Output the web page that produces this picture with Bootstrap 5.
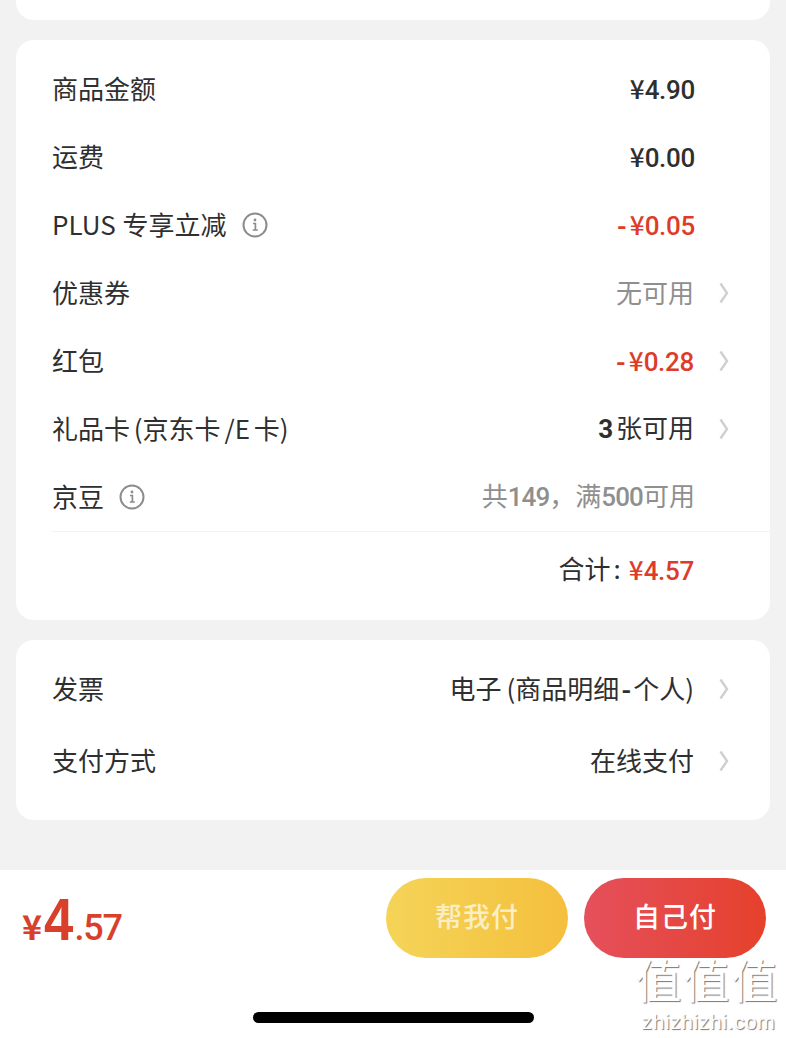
<!DOCTYPE html>
<html lang="zh">
<head>
<meta charset="utf-8">
<title>订单结算</title>
<link href="https://cdn.jsdelivr.net/npm/bootstrap@5.3.0/dist/css/bootstrap.min.css" rel="stylesheet">
<style>
html,body{height:1038px;overflow:hidden}
body{background:#f2f2f2;font-family:"Noto Sans CJK SC","Noto Sans",sans-serif;color:#2f2f2f;font-size:26px;position:relative}
.sheet{border-radius:18px;background:#fff;margin:0 16px 20px}
.sheet-stub{height:20px;border-radius:0 0 18px 18px}
.sheet-fees{height:580px;padding:15px 0 0 36px}
.sheet-misc{height:180px;padding:13px 0 0 36px;margin-bottom:50px}
.fee-row{height:68px;padding-right:75px;line-height:1}
.misc-row{height:72px;padding-right:75px;line-height:1}
.has-arrow{padding-right:41px}
.zh{padding-bottom:3px;word-spacing:-2px}
.zh-wide{word-spacing:1px}
.amt{font-family:Roboto,"Noto Sans CJK SC",sans-serif;font-weight:500;letter-spacing:-.3px}
.amt-tight{letter-spacing:-.9px}
.cny{font-family:"Noto Sans CJK SC",sans-serif;font-weight:500;letter-spacing:0}
.minus{font-weight:700;display:inline-block;width:16px;text-align:center}
.red{color:#dd3c2a}
.mute{color:#8f8f8f}
.arrow{width:10px;height:22px;margin-left:25px;flex:none}
.info{width:26px;height:26px;margin-left:15px;flex:none}
.rule{height:1px;background:#f3f3f3;margin:0}
.total-row{height:75px;padding-right:76px;line-height:1}
.colon{margin:0 8px 0 3px}
.dash{display:inline-block;width:14px;text-align:center;font-weight:700}
.paren-open{margin-left:1px}
.pay-gap{margin-left:3px}
.paybar{height:168px;background:#fff;padding:8px 20px 0 22px}
.pay-sum{color:#d9402b;font-family:"Liberation Sans",sans-serif;font-weight:700;line-height:1;padding-top:12px}
.pay-cny{font-size:34px;font-family:"Noto Sans CJK SC",sans-serif;font-weight:700}
.pay-int{font-size:60px;display:inline-block;transform:scaleX(.88);transform-origin:left;margin-right:-3px;margin-left:2px}
.pay-dec{font-size:36px;font-family:Roboto,sans-serif;font-weight:500;letter-spacing:-1.2px}
.pay-btn{width:182px;height:80px;border:0;border-radius:40px;color:#fff;font-size:27px;font-weight:500;letter-spacing:1px;padding:0 0 4px}
.btn-help{background:linear-gradient(90deg,#f4d458,#f5bf3d);color:#fbeec4}
.btn-self{background:linear-gradient(90deg,#e5505c,#e5412c)}
.homebar{position:absolute;left:253px;top:1012px;width:281px;height:11px;border-radius:6px;background:#000}
.wm{position:absolute;left:636px;top:955px;width:145px;text-align:center;color:#fff;line-height:1;text-shadow:1px 1px 1px #777}
.wm-cn{font-size:46px;letter-spacing:2px;display:block;height:50px;white-space:nowrap;margin:0 0 6px -2px}
.wm-en{font-size:21px;font-family:"Liberation Sans",sans-serif;letter-spacing:.6px;display:block;white-space:nowrap}
</style>
</head>
<body>
<div class="sheet sheet-stub"></div>

<div class="sheet sheet-fees">
  <div class="fee-row d-flex align-items-center justify-content-between"><span class="zh">商品金额</span><span class="amt"><span class="cny">¥</span>4.90</span></div>
  <div class="fee-row d-flex align-items-center justify-content-between"><span class="zh">运费</span><span class="amt"><span class="cny">¥</span>0.00</span></div>
  <div class="fee-row d-flex align-items-center justify-content-between"><span class="d-flex align-items-center"><span class="zh zh-wide">PLUS 专享立减</span><svg class="info" viewBox="0 0 26 26" fill="none"><circle cx="13" cy="13" r="11.5" stroke="#8c8c8c" stroke-width="2"/><path d="M11 11.5h2.4V18M10.8 18h5" stroke="#8c8c8c" stroke-width="1.7"/><circle cx="13" cy="8" r="1.4" fill="#8c8c8c"/></svg></span><span class="amt red"><span class="cny"><span class="minus">-</span>¥</span>0.05</span></div>
  <div class="fee-row has-arrow d-flex align-items-center justify-content-between"><span class="zh">优惠券</span><span class="d-flex align-items-center mute"><span class="zh">无可用</span><svg class="arrow" viewBox="0 0 10 22" fill="none"><path d="M1.5 1.5 8 11 1.5 20.5" stroke="#cfcfcf" stroke-width="2.4"/></svg></span></div>
  <div class="fee-row has-arrow d-flex align-items-center justify-content-between"><span class="zh">红包</span><span class="d-flex align-items-center amt red"><span><span class="cny"><span class="minus">-</span>¥</span>0.28</span><svg class="arrow" viewBox="0 0 10 22" fill="none"><path d="M1.5 1.5 8 11 1.5 20.5" stroke="#cfcfcf" stroke-width="2.4"/></svg></span></div>
  <div class="fee-row has-arrow d-flex align-items-center justify-content-between"><span class="zh">礼品卡 (京东卡 /E 卡)</span><span class="d-flex align-items-center"><span class="zh"><span class="amt fw-bold">3</span><span class="pay-gap"></span>张可用</span><svg class="arrow" viewBox="0 0 10 22" fill="none"><path d="M1.5 1.5 8 11 1.5 20.5" stroke="#cfcfcf" stroke-width="2.4"/></svg></span></div>
  <div class="fee-row d-flex align-items-center justify-content-between"><span class="d-flex align-items-center"><span class="zh">京豆</span><svg class="info" viewBox="0 0 26 26" fill="none"><circle cx="13" cy="13" r="11.5" stroke="#8c8c8c" stroke-width="2"/><path d="M11 11.5h2.4V18M10.8 18h5" stroke="#8c8c8c" stroke-width="1.7"/><circle cx="13" cy="8" r="1.4" fill="#8c8c8c"/></svg></span><span class="mute zh">共<span class="amt amt-tight">149</span>，满<span class="amt amt-tight">500</span>可用</span></div>
  <div class="rule"></div>
  <div class="total-row d-flex align-items-center justify-content-end"><span class="zh">合计<span class="colon">:</span></span><span class="amt red"><span class="cny">¥</span>4.57</span></div>
</div>

<div class="sheet sheet-misc">
  <div class="misc-row has-arrow d-flex align-items-center justify-content-between"><span class="zh">发票</span><span class="d-flex align-items-center"><span class="zh">电子 <span class="paren-open">(</span>商品明细<span class="dash">-</span>个人)</span><svg class="arrow" viewBox="0 0 10 22" fill="none"><path d="M1.5 1.5 8 11 1.5 20.5" stroke="#cfcfcf" stroke-width="2.4"/></svg></span></div>
  <div class="misc-row has-arrow d-flex align-items-center justify-content-between"><span class="zh">支付方式</span><span class="d-flex align-items-center"><span class="zh">在线支付</span><svg class="arrow" viewBox="0 0 10 22" fill="none"><path d="M1.5 1.5 8 11 1.5 20.5" stroke="#cfcfcf" stroke-width="2.4"/></svg></span></div>
</div>

<div class="paybar d-flex justify-content-between align-items-start">
  <div class="pay-sum"><span class="pay-cny">¥</span><span class="pay-int">4</span><span class="pay-dec">.57</span></div>
  <div class="d-flex gap-3">
    <button type="button" class="btn pay-btn btn-help">帮我付</button>
    <button type="button" class="btn pay-btn btn-self">自己付</button>
  </div>
</div>

<div class="homebar"></div>
<div class="wm"><span class="wm-cn">值值值</span><span class="wm-en">zhizhizhi.com</span></div>
<script src="https://cdn.jsdelivr.net/npm/bootstrap@5.3.0/dist/js/bootstrap.bundle.min.js"></script>
</body>
</html>
